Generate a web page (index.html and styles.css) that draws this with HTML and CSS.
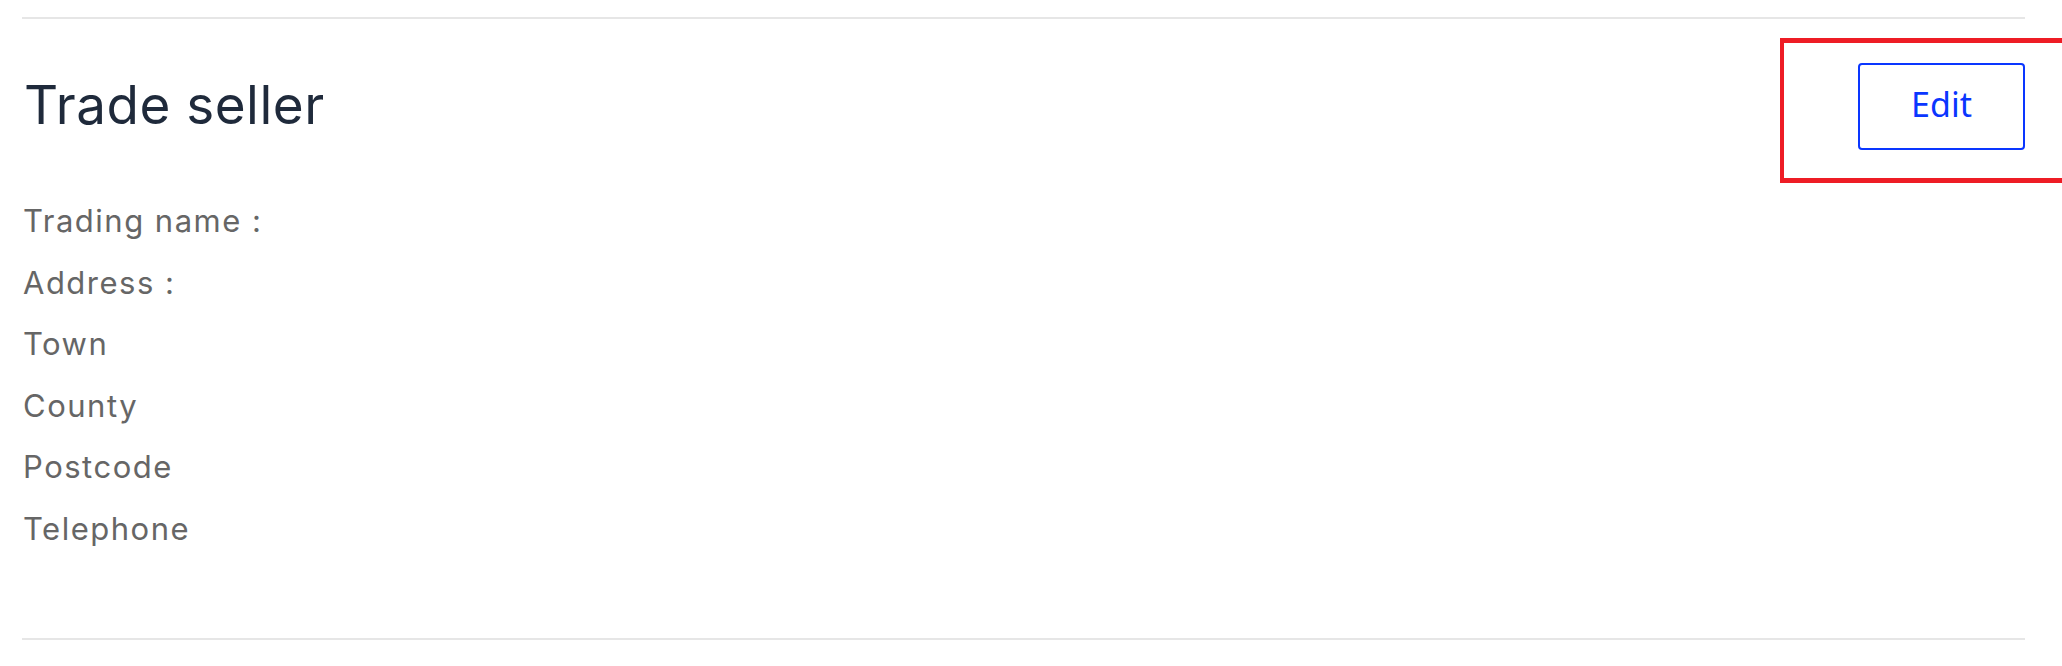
FILE: index.html
```html
<!DOCTYPE html>
<html lang="en">
<head>
<meta charset="utf-8">
<title>Trade seller</title>
<link rel="stylesheet" href="styles.css">
</head>
<body>
<section class="panel">
  <hr class="rule">
  <div class="panel-head">
    <h2 class="panel-title">Trade seller</h2>
    <button class="btn-edit" type="button">Edit</button>
  </div>
  <ul class="details">
    <li>Trading name :</li>
    <li>Address :</li>
    <li>Town</li>
    <li>County</li>
    <li>Postcode</li>
    <li>Telephone</li>
  </ul>
  <hr class="rule rule-bottom">
</section>
<div class="highlight"></div>
</body>
</html>
```

FILE: styles.css
```css
html, body {
  margin: 0;
  padding: 0;
  background: #ffffff;
}

body {
  font-family: "Inter", "Liberation Sans", sans-serif;
  width: 2062px;
  height: 666px;
  overflow: hidden;
  position: relative;
}

.panel {
  padding: 17px 37px 0 22px;
}

.rule {
  border: 0;
  margin: 0;
  height: 2px;
  background: #e6e6e6;
}

.panel-head {
  display: flex;
  justify-content: space-between;
  align-items: flex-start;
  padding-top: 44px;
}

.panel-title {
  margin: 0;
  padding: 10px 0 0 2px;
  font-family: "Inter", sans-serif;
  font-weight: 400;
  font-size: 53px;
  line-height: 64px;
  color: #1f2a3b;
  letter-spacing: 0.5px;
}

.btn-edit {
  width: 167px;
  height: 87px;
  margin: 0;
  padding: 0 0 5px;
  background: #ffffff;
  border: 2px solid #0a36ff;
  border-radius: 4px;
  color: #0a36ff;
  font-family: "Noto Sans", "Open Sans", sans-serif;
  font-size: 34px;
  line-height: 1;
  cursor: pointer;
}

.details {
  list-style: none;
  margin: 0;
  padding: 40px 0 0 1px;
}

.details li {
  font-family: "Inter", sans-serif;
  font-size: 31px;
  line-height: 61.5px;
  letter-spacing: 1.5px;
  color: #666666;
}

.rule-bottom {
  margin-top: 79px;
}

.highlight {
  position: absolute;
  left: 1780px;
  top: 38px;
  width: 320px;
  height: 135px;
  border: 5px solid #ee1c25;
  border-left-width: 4px;
}
```
